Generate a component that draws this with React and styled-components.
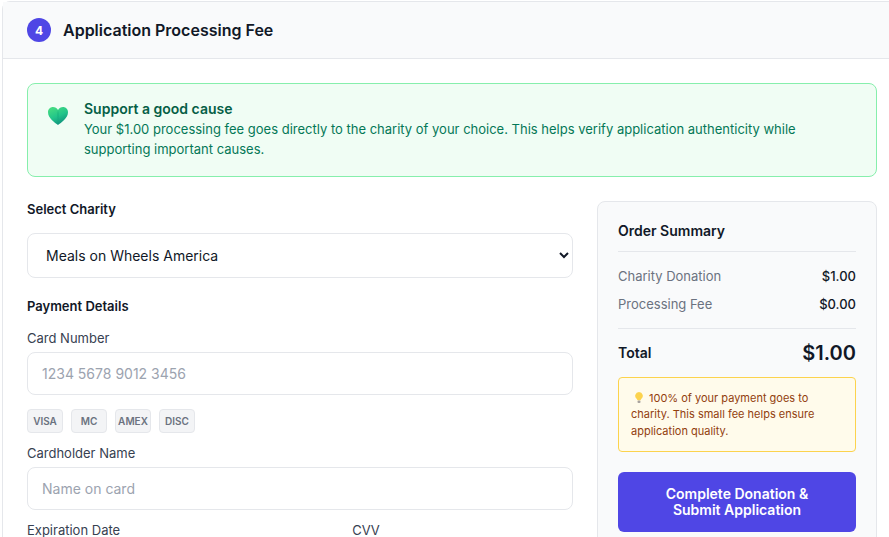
import React from 'react';
import styled, { createGlobalStyle } from 'styled-components';

const Global = createGlobalStyle`
  html, body { margin: 0; padding: 0; height: 537px; overflow: hidden; background: #fff; }
  body { font-family: Inter, "Liberation Sans", sans-serif; color: #111827; }
  * { box-sizing: border-box; }
`;
const Page = styled.div`width: 889px; height: 537px; overflow: hidden; padding: 1px 0 0 2px;`;
const Card = styled.section`width: 900px; height: 700px; background: #fff; border: 1px solid #e5e7eb; border-radius: 8px 8px 0 0;`;
const Header = styled.header`height: 57px; display: flex; align-items: center; gap: 12px; padding: 0 24px; background: #f9fafb; border-bottom: 1px solid #e5e7eb;`;
const Step = styled.span`width: 24px; height: 24px; border-radius: 50%; background: #4f46e5; color: #fff; font-size: 12px; font-weight: 700; display: flex; align-items: center; justify-content: center;`;
const Title = styled.h2`margin: 0; font-size: 16px; line-height: 24px; font-weight: 600; color: #111827;`;
const Body = styled.div`padding: 24px 24px 0;`;
const Alert = styled.div`height: 94px; display: flex; gap: 16px; padding: 15px 20px; background: #f0fdf4; border: 1px solid #86efac; border-radius: 8px;`;
const HeartWrap = styled.div`padding-top: 8px; flex: none; line-height: 0;`;
const AlertTitle = styled.div`font-size: 14px; line-height: 20px; font-weight: 600; color: #065f46;`;
const AlertText = styled.p`margin: 0; font-size: 13px; line-height: 20px; color: #047857;`;
const Columns = styled.div`display: grid; grid-template-columns: 546px 280px; gap: 24px; margin-top: 24px;`;
const Col = styled.div`display: flex; flex-direction: column;`;
const StrongLabel = styled.div`font-size: 13px; line-height: 16px; font-weight: 600; color: #111827; margin-bottom: ${p => p.$mb}px;`;
const Select = styled.select`width: 100%; height: 45px; padding: 0 14px; font: 14px Inter, sans-serif; color: #111827; background: #fff; border: 1px solid #e5e7eb; border-radius: 8px; margin-bottom: 20px; outline: none;`;
const Label = styled.label`display: block; font-size: 13px; line-height: 16px; font-weight: 400; color: #374151; margin-bottom: 6px;`;
const Input = styled.input`width: 100%; height: 43px; padding: 0 14px; font: 14px Inter, sans-serif; background: #fff; border: 1px solid #e5e7eb; border-radius: 8px; outline: none;
  &::placeholder { color: #9ca3af; opacity: 1; }`;
const Badges = styled.div`display: flex; gap: 8px; margin: 14px 0 12px;`;
const Badge = styled.span`width: 36px; height: 24px; display: flex; align-items: center; justify-content: center; background: #f3f4f6; border: 1px solid #e5e7eb; border-radius: 4px; font-size: 10px; font-weight: 600; color: #6b7280;`;
const Split = styled.div`display: grid; grid-template-columns: 1.4fr 1fr; gap: 16px; margin-top: 12px;`;
const Summary = styled.aside`height: 400px; padding: 20px; background: #f9fafb; border: 1px solid #e5e7eb; border-radius: 8px;`;
const SumTitle = styled.h3`margin: 0 0 14px; padding-bottom: 11px; font-size: 14px; line-height: 18px; font-weight: 600; color: #111827; border-bottom: 1px solid #e5e7eb;`;
const Row = styled.div`display: flex; justify-content: space-between; align-items: center; font-size: 13px; line-height: 20px; margin-bottom: 8px; color: #6b7280;`;
const Amount = styled.span`color: #111827; font-weight: 500;`;
const Total = styled.div`display: flex; justify-content: space-between; align-items: center; margin-top: 14px; padding-top: 12px; border-top: 1px solid #e5e7eb;`;
const TotalLabel = styled.span`font-size: 14px; line-height: 24px; font-weight: 600;`;
const TotalValue = styled.span`font-size: 20px; line-height: 24px; font-weight: 600;`;
const Note = styled.div`margin-top: 12px; padding: 11.75px 12px 12px; height: 75px; background: #fffbeb; border: 1px solid #fcd34d; border-radius: 4px; font-size: 11px; line-height: 16.5px; color: #92400e;`;
const Bulb = styled.svg`width: 8px; height: 11px; vertical-align: -1px; margin: 0 6px 0 4px;`;
const Submit = styled.button`display: block; width: 100%; height: 60px; margin-top: 20px; border: 0; border-radius: 6px; background: #4f46e5; color: #fff; font: 600 14px/16px Inter, sans-serif;`;

export default function App() {
  return (
    <Page>
      <Global />
      <Card>
        <Header><Step>4</Step><Title>Application Processing Fee</Title></Header>
        <Body>
          <Alert>
            <HeartWrap>
              <svg width="20" height="18" viewBox="0 0 20 18">
                <defs>
                  <linearGradient id="hg" x1="0.1" y1="0" x2="0.6" y2="1"><stop offset="0" stopColor="#4ade80"/><stop offset="0.55" stopColor="#22c58a"/><stop offset="1" stopColor="#0f8f7c"/></linearGradient>
                  <linearGradient id="hd" x1="0" y1="0" x2="0" y2="1"><stop offset="0" stopColor="#059669" stopOpacity="0.4"/><stop offset="1" stopColor="#059669" stopOpacity="0"/></linearGradient>
                </defs>
                <path d="M10 18C7 15.8 0 11 0 5.2 0 2.2 2.3 0 5 0 7 0 9 1.1 10 3 11 1.1 13 0 15 0 17.7 0 20 2.2 20 5.2 20 11 13 15.8 10 18Z" fill="url(#hg)"/>
                <path d="M10 3C8.8 7 8.8 12 10 18 11.2 12 11.2 7 10 3Z" fill="url(#hd)"/>
              </svg>
            </HeartWrap>
            <div>
              <AlertTitle>Support a good cause</AlertTitle>
              <AlertText>Your $1.00 processing fee goes directly to the charity of your choice. This helps verify application authenticity while supporting important causes.</AlertText>
            </div>
          </Alert>
          <Columns>
            <Col>
              <StrongLabel $mb={16}>Select Charity</StrongLabel>
              <Select defaultValue="m"><option value="m">Meals on Wheels America</option></Select>
              <StrongLabel $mb={16}>Payment Details</StrongLabel>
              <Label>Card Number</Label>
              <Input placeholder="1234 5678 9012 3456" />
              <Badges>
                <Badge>VISA</Badge><Badge>MC</Badge><Badge>AMEX</Badge><Badge>DISC</Badge>
              </Badges>
              <Label>Cardholder Name</Label>
              <Input placeholder="Name on card" />
              <Split>
                <Label>Expiration Date</Label>
                <Label>CVV</Label>
              </Split>
            </Col>
            <Summary>
              <SumTitle>Order Summary</SumTitle>
              <Row><span>Charity Donation</span><Amount>$1.00</Amount></Row>
              <Row><span>Processing Fee</span><Amount>$0.00</Amount></Row>
              <Total><TotalLabel>Total</TotalLabel><TotalValue>$1.00</TotalValue></Total>
              <Note>
                <Bulb viewBox="0 0 8 11"><path d="M4 0a3.8 3.8 0 0 0-2.2 6.9L2.5 8.2h3l.7-1.3A3.8 3.8 0 0 0 4 0Z" fill="#fcd34d"/><rect x="2.5" y="8.4" width="3" height="2.6" rx="1" fill="#a8a29e"/></Bulb>
                100% of your payment goes to charity. This small fee helps ensure application quality.
              </Note>
              <Submit>Complete Donation &amp;<br />Submit Application</Submit>
            </Summary>
          </Columns>
        </Body>
      </Card>
    </Page>
  );
}
